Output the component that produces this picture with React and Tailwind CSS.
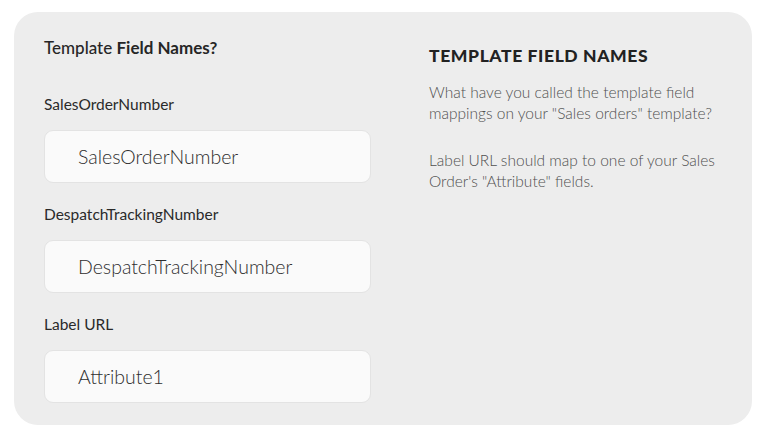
import React from 'react';

const fields = [
  { label: 'SalesOrderNumber', value: 'SalesOrderNumber' },
  { label: 'DespatchTrackingNumber', value: 'DespatchTrackingNumber' },
  { label: 'Label URL', value: 'Attribute1' },
];

const App = () => {
  return (
    <div className="min-h-screen bg-white pt-[12px] pl-[14px]" style={{ fontFamily: 'Lato, "Open Sans", sans-serif' }}>
      <div className="w-[738px] h-[413px] bg-[#ededed] rounded-[24px] pl-[30px] pt-[26px] flex gap-[58px]">
        {/* Left - field inputs */}
        <div className="w-[327px] flex flex-col">
          <h3 className="text-[17px] leading-[20px] text-[#262626]">
            <span className="font-medium">Template </span>
            <span className="font-bold">Field Names?</span>
          </h3>
          <div className="mt-[36px] flex flex-col">
            {fields.map((f, i) => (
              <div key={f.label} className={i > 0 ? 'mt-[21px]' : ''}>
                <label className="block text-[15.5px] leading-[20px] text-[#2a2a2a]">{f.label}</label>
                <div className="mt-[16px] h-[53px] rounded-[9px] border border-[#e3e3e3] bg-[#fafafa] flex items-center pl-[33px]">
                  <span className="text-[19.5px] font-light text-[#2e2e2e]">{f.value}</span>
                </div>
              </div>
            ))}
          </div>
        </div>

        {/* Right - help text */}
        <div className="w-[295px] pt-[6px]">
          <h2 className="text-[17.5px] leading-[24px] font-black tracking-[0.6px] text-[#222]">TEMPLATE FIELD NAMES</h2>
          <p className="mt-[14px] text-[15.5px] leading-[21px] font-light text-[#505050]">
            What have you called the template field mappings on your "Sales orders" template?
          </p>
          <p className="mt-[26px] text-[15.5px] leading-[21px] font-light text-[#505050]">
            Label URL should map to one of your Sales Order's "Attribute" fields.
          </p>
        </div>
      </div>
    </div>
  );
};

export default App;
